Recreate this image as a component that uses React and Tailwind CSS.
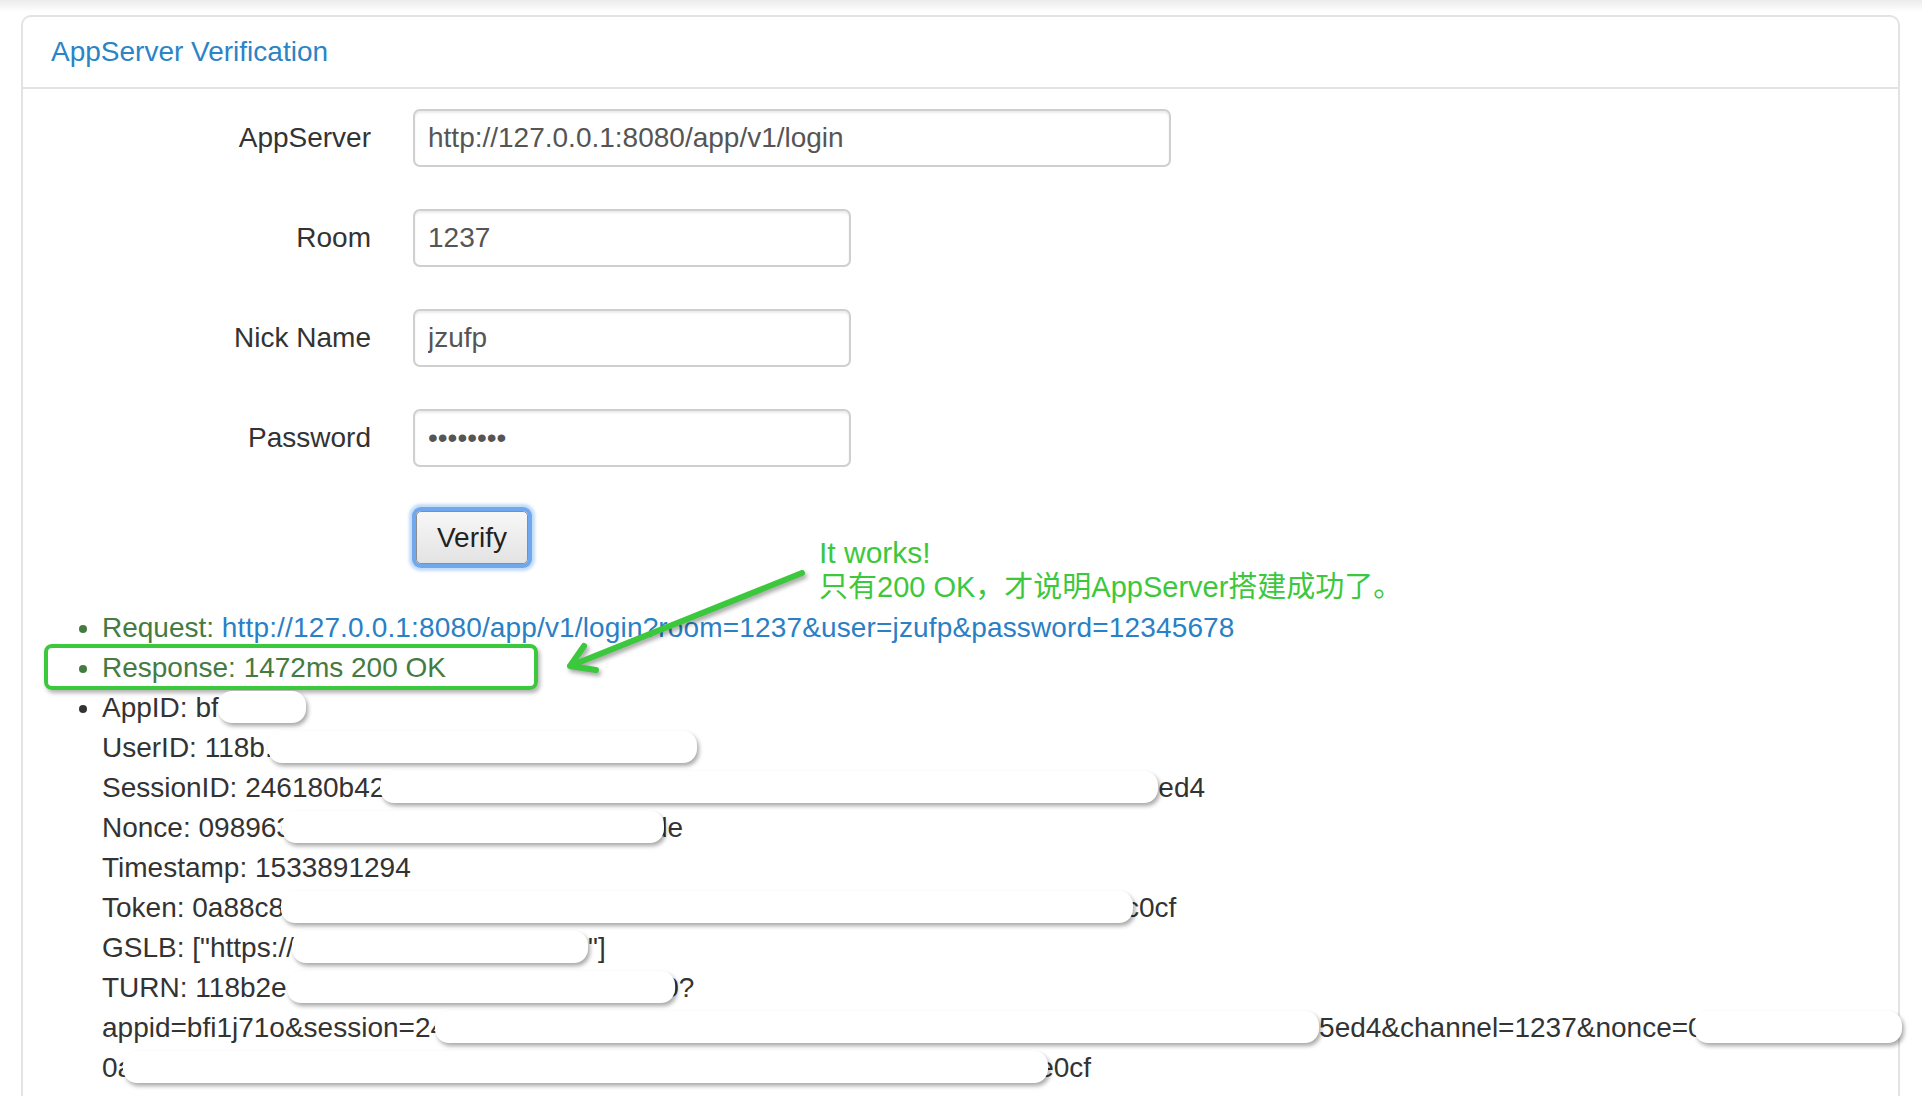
import React from "react";

function Blob({ c }) {
  return (
    <span
      className={
        "relative z-10 inline-block h-[32px] rounded-[14px] bg-white align-[-6px] shadow-[2px_3px_4px_rgba(0,0,0,0.34)] " +
        c
      }
    />
  );
}

function Row({ label, children }) {
  return (
    <div className="flex items-center">
      <div className="w-[348px] text-right text-[#333]">{label}</div>
      <div className="ml-[42px]">{children}</div>
    </div>
  );
}

const inputCls =
  "block h-[58px] rounded-[7px] border-2 border-[#cfcfcf] bg-white pl-[13px] text-[28px] text-[#555] shadow-[inset_0_2px_2px_rgba(0,0,0,0.08)] outline-none font-['Liberation_Sans',Arial,sans-serif]";

export default function App() {
  return (
    <div className="relative h-[1096px] w-[1922px] overflow-hidden bg-[linear-gradient(to_bottom,#ebebeb,#ffffff_12px)] font-['Liberation_Sans',Arial,sans-serif] text-[28px] text-[#333]">
      <div className="pl-[21px] pr-[22px] pt-[15px]">
        <div className="rounded-t-[10px] border-2 border-b-0 border-[#e3e3e3] bg-white pb-[60px]">
          <div className="flex h-[72px] items-center border-b-2 border-[#e3e3e3] pl-[28px]">
            <h3 className="text-[28px] text-[#2a84c6]">AppServer Verification</h3>
          </div>

          <div className="pt-[20px]">
            <div className="flex flex-col gap-[42px]">
              <Row label="AppServer">
                <input
                  readOnly
                  type="text"
                  value="http://127.0.0.1:8080/app/v1/login"
                  className={inputCls + " w-[758px]"}
                />
              </Row>
              <Row label="Room">
                <input readOnly type="text" value="1237" className={inputCls + " w-[438px]"} />
              </Row>
              <Row label="Nick Name">
                <input readOnly type="text" value="jzufp" className={inputCls + " w-[438px]"} />
              </Row>
              <Row label="Password">
                <input readOnly type="password" value="12345678" className={inputCls + " w-[438px]"} />
              </Row>
            </div>

            <div className="ml-[393px] mt-[44px]">
              <button className="flex h-[53px] w-[112px] items-center justify-center rounded-[5px] border border-[#8d8d8d] bg-[linear-gradient(to_bottom,#f7f7f7,#e3e3e3)] text-[28px] text-[#222] shadow-[0_0_0_4px_#6fa8ec,0_0_3px_7px_rgba(120,175,240,0.45)]">
                Verify
              </button>
            </div>

            <ul className="mt-[44px] list-disc pl-[79px] leading-[40px]">
              <li className="text-[#457b41]">
                Request:{" "}
                <a className="tracking-[0.15px] text-[#2a80c5]">
                  http://127.0.0.1:8080/app/v1/login?room=1237&amp;user=jzufp&amp;password=12345678
                </a>
              </li>
              <li className="text-[#457b41]">Response: 1472ms 200 OK</li>
              <li className="whitespace-nowrap text-[#333]">
                AppID: bf
                <Blob c="w-[88px] ml-[-1px]" />
                <br />
                UserID: 118b.
                <Blob c="w-[429px] ml-[-5px]" />
                <br />
                SessionID: 246180b42
                <Blob c="w-[778px] ml-[-5px]" />
                ed4
                <br />
                Nonce: 098963
                <Blob c="w-[382px] ml-[-10px] mr-[-12px]" />
                de
                <br />
                Timestamp: 1533891294
                <br />
                Token: 0a88c8.
                <Blob c="w-[852px] ml-[-11px] mr-[-8px]" />
                c0cf
                <br />
                GSLB: ["https://
                <Blob c="w-[296px] ml-[-2px]" />
                "]
                <br />
                TURN: 118b2e0
                <Blob c="w-[388px] ml-[-15px] mr-[-12px]" />
                0?
                <br />
                appid=bfi1j71o&amp;session=24
                <Blob c="w-[884px] ml-[-11px]" />
                5ed4&amp;channel=1237&amp;nonce=0
                <Blob c="w-[208px] ml-[-10px]" />
                <br />
                0a
                <Blob c="w-[925px] ml-[-10px] mr-[-10px]" />
                e0cf
              </li>
            </ul>
          </div>
        </div>
      </div>

      {/* annotation: highlight box around the Response line */}
      <div className="absolute left-[44px] top-[644px] h-[46px] w-[494px] rounded-[8px] border-4 border-[#3cc83c] shadow-[2px_3px_4px_rgba(0,0,0,0.3)]" />

      {/* annotation: arrow */}
      <svg
        className="absolute left-[540px] top-[550px] drop-shadow-[2px_3px_2px_rgba(0,0,0,0.35)]"
        width="290"
        height="140"
        viewBox="0 0 290 140"
        fill="none"
      >
        <path
          d="M262 23 L30 116 M30 116 L44 96 M30 116 L56 120"
          stroke="#3cc83c"
          strokeWidth="6"
          strokeLinecap="round"
          strokeLinejoin="round"
        />
      </svg>

      {/* annotation: text */}
      <div className="absolute left-[819px] top-[535px] text-[29px] leading-[35px] text-[#3cc83c] font-['Liberation_Sans','Noto_Sans_CJK_SC',sans-serif]">
        <div className="text-[30px]">It works!</div>
        <div>只有200 OK，才说明AppServer搭建成功了。</div>
      </div>
    </div>
  );
}
